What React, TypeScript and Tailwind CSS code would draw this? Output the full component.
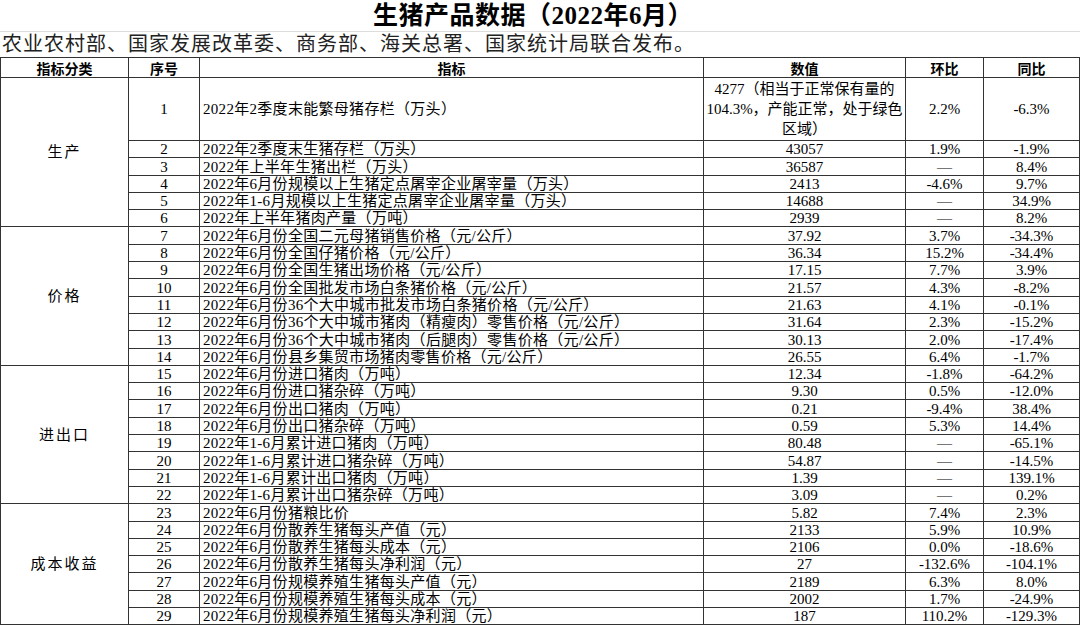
import React from 'react';

type Row = { no: number; name: string; value: string; mom: string; yoy: string };

interface Group {
  label: string;
  rows: Row[];
}

const groups: Group[] = [
  {
    label: '生产',
    rows: [
      { no: 1, name: '2022年2季度末能繁母猪存栏（万头）', value: '', mom: '2.2%', yoy: '-6.3%' },
      { no: 2, name: '2022年2季度末生猪存栏（万头）', value: '43057', mom: '1.9%', yoy: '-1.9%' },
      { no: 3, name: '2022年上半年生猪出栏（万头）', value: '36587', mom: '—', yoy: '8.4%' },
      { no: 4, name: '2022年6月份规模以上生猪定点屠宰企业屠宰量（万头）', value: '2413', mom: '-4.6%', yoy: '9.7%' },
      { no: 5, name: '2022年1-6月规模以上生猪定点屠宰企业屠宰量（万头）', value: '14688', mom: '—', yoy: '34.9%' },
      { no: 6, name: '2022年上半年猪肉产量（万吨）', value: '2939', mom: '—', yoy: '8.2%' },
    ],
  },
  {
    label: '价格',
    rows: [
      { no: 7, name: '2022年6月份全国二元母猪销售价格（元/公斤）', value: '37.92', mom: '3.7%', yoy: '-34.3%' },
      { no: 8, name: '2022年6月份全国仔猪价格（元/公斤）', value: '36.34', mom: '15.2%', yoy: '-34.4%' },
      { no: 9, name: '2022年6月份全国生猪出场价格（元/公斤）', value: '17.15', mom: '7.7%', yoy: '3.9%' },
      { no: 10, name: '2022年6月份全国批发市场白条猪价格（元/公斤）', value: '21.57', mom: '4.3%', yoy: '-8.2%' },
      { no: 11, name: '2022年6月份36个大中城市批发市场白条猪价格（元/公斤）', value: '21.63', mom: '4.1%', yoy: '-0.1%' },
      { no: 12, name: '2022年6月份36个大中城市猪肉（精瘦肉）零售价格（元/公斤）', value: '31.64', mom: '2.3%', yoy: '-15.2%' },
      { no: 13, name: '2022年6月份36个大中城市猪肉（后腿肉）零售价格（元/公斤）', value: '30.13', mom: '2.0%', yoy: '-17.4%' },
      { no: 14, name: '2022年6月份县乡集贸市场猪肉零售价格（元/公斤）', value: '26.55', mom: '6.4%', yoy: '-1.7%' },
    ],
  },
  {
    label: '进出口',
    rows: [
      { no: 15, name: '2022年6月份进口猪肉（万吨）', value: '12.34', mom: '-1.8%', yoy: '-64.2%' },
      { no: 16, name: '2022年6月份进口猪杂碎（万吨）', value: '9.30', mom: '0.5%', yoy: '-12.0%' },
      { no: 17, name: '2022年6月份出口猪肉（万吨）', value: '0.21', mom: '-9.4%', yoy: '38.4%' },
      { no: 18, name: '2022年6月份出口猪杂碎（万吨）', value: '0.59', mom: '5.3%', yoy: '14.4%' },
      { no: 19, name: '2022年1-6月累计进口猪肉（万吨）', value: '80.48', mom: '—', yoy: '-65.1%' },
      { no: 20, name: '2022年1-6月累计进口猪杂碎（万吨）', value: '54.87', mom: '—', yoy: '-14.5%' },
      { no: 21, name: '2022年1-6月累计出口猪肉（万吨）', value: '1.39', mom: '—', yoy: '139.1%' },
      { no: 22, name: '2022年1-6月累计出口猪杂碎（万吨）', value: '3.09', mom: '—', yoy: '0.2%' },
    ],
  },
  {
    label: '成本收益',
    rows: [
      { no: 23, name: '2022年6月份猪粮比价', value: '5.82', mom: '7.4%', yoy: '2.3%' },
      { no: 24, name: '2022年6月份散养生猪每头产值（元）', value: '2133', mom: '5.9%', yoy: '10.9%' },
      { no: 25, name: '2022年6月份散养生猪每头成本（元）', value: '2106', mom: '0.0%', yoy: '-18.6%' },
      { no: 26, name: '2022年6月份散养生猪每头净利润（元）', value: '27', mom: '-132.6%', yoy: '-104.1%' },
      { no: 27, name: '2022年6月份规模养殖生猪每头产值（元）', value: '2189', mom: '6.3%', yoy: '8.0%' },
      { no: 28, name: '2022年6月份规模养殖生猪每头成本（元）', value: '2002', mom: '1.7%', yoy: '-24.9%' },
      { no: 29, name: '2022年6月份规模养殖生猪每头净利润（元）', value: '187', mom: '110.2%', yoy: '-129.3%' },
    ],
  },
];

const serif = 'font-["Liberation_Serif","Noto_Sans_CJK_SC",serif]';
const cell = 'border border-[#333] p-0 leading-[16px] align-bottom';

export default function App() {
  return (
    <div className={`w-[1080px] h-[625px] overflow-hidden bg-white text-black ${serif}`}>
      <div className="h-[32px] border-b border-[#ddd] flex items-center justify-center pr-[14px]">
        <h1 className="text-[25px] font-bold tracking-[0.5px] leading-[30px]">
          生猪产品数据（2022年6月）
        </h1>
      </div>
      <div className="h-[24px] pl-[2px] text-[20px] leading-[24px] tracking-[1px] whitespace-nowrap text-[#222]">
        农业农村部、国家发展改革委、商务部、海关总署、国家统计局联合发布。
      </div>
      <table className="table-fixed border-collapse w-[1079px] text-[15px] mt-[1px]">
        <colgroup>
          <col className="w-[128px]" />
          <col className="w-[71px]" />
          <col className="w-[504px]" />
          <col className="w-[202px]" />
          <col className="w-[78px]" />
          <col className="w-[96px]" />
        </colgroup>
        <thead>
          <tr className='h-[20px] font-["Noto_Sans_CJK_SC",sans-serif] text-[14px] font-medium'>
            <th className={`${cell} align-middle`}>指标分类</th>
            <th className={`${cell} align-middle`}>序号</th>
            <th className={`${cell} align-middle`}>指标</th>
            <th className={`${cell} align-middle`}>数值</th>
            <th className={`${cell} align-middle`}>环比</th>
            <th className={`${cell} align-middle`}>同比</th>
          </tr>
        </thead>
        <tbody>
          {groups.map((g) =>
            g.rows.map((r, i) => (
              <tr key={r.no} className={r.no === 1 ? 'h-[63px]' : 'h-[17.3px]'}>
                {i === 0 && (
                  <td rowSpan={g.rows.length} className={`${cell} align-middle text-center`}>
                    <span className="tracking-[2px]">{g.label}</span>
                  </td>
                )}
                <td className={`${cell} text-center ${r.no === 1 ? 'align-middle' : ''}`}>{r.no}</td>
                <td className={`${cell} pl-[3px] whitespace-nowrap tracking-[0.3px] ${r.no === 1 ? 'align-middle' : ''}`}>
                  {r.name}
                </td>
                {r.no === 1 ? (
                  <td className={`${cell} align-middle text-center leading-[20px] whitespace-nowrap`}>
                    4277（相当于正常保有量的
                    <br />
                    104.3%，产能正常，处于绿色
                    <br />
                    区域）
                  </td>
                ) : (
                  <td className={`${cell} text-center`}>{r.value}</td>
                )}
                <td className={`${cell} text-center ${r.no === 1 ? 'align-middle' : ''}`}>{r.mom}</td>
                <td className={`${cell} text-center ${r.no === 1 ? 'align-middle' : ''}`}>{r.yoy}</td>
              </tr>
            ))
          )}
        </tbody>
      </table>
    </div>
  );
}
